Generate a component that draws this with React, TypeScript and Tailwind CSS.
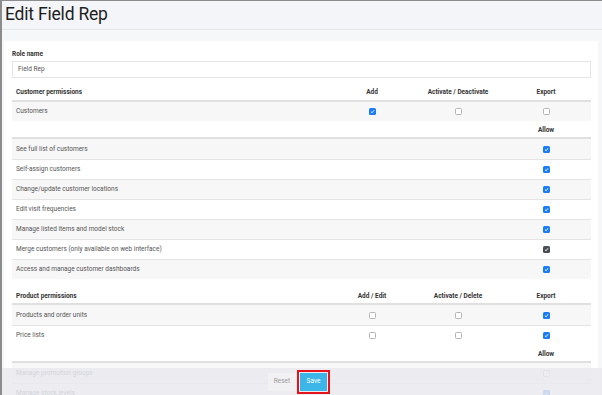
import React from "react";

type Cell = "none" | "off" | "on" | "dark";

function Box({ s }: { s: Cell }) {
  if (s === "none") return null;
  if (s === "off")
    return <span className="block w-[7px] h-[7px] rounded-[1.5px] border border-[#b4b4b4] bg-white" />;
  return (
    <span
      className={
        "flex items-center justify-center w-[7px] h-[7px] rounded-[1.5px] " +
        (s === "on" ? "bg-[#1a7df4]" : "bg-[#4a4f57]")
      }
    >
      <svg width="5" height="5" viewBox="0 0 10 10">
        <path d="M2 5.5 L4.2 7.5 L8 2.5" stroke="white" strokeWidth="1.8" fill="none" />
      </svg>
    </span>
  );
}

type Row = { label: string; cells: Cell[]; gray: boolean };

function Header({ cols, h }: { cols: string[]; h: string }) {
  return (
    <div
      className={
        "grid grid-cols-[1fr_86px_86px_90px] items-center pt-[2px] border-b-2 border-[#e0e0e0] font-bold text-[#333] " + h
      }
    >
      <div className="pl-[4px]">{cols[0]}</div>
      <div className="text-center">{cols[1]}</div>
      <div className="text-center">{cols[2]}</div>
      <div className="text-center">{cols[3]}</div>
    </div>
  );
}

function RowView({ r, h = "h-[20px]", top = true }: { r: Row; h?: string; top?: boolean }) {
  return (
    <div
      className={
        "grid grid-cols-[1fr_86px_86px_90px] items-center text-[#555] " +
        h +
        (top ? " border-t border-[#e4e4e4]" : "") +
        (r.gray ? " bg-[#f7f7f7]" : " bg-white")
      }
    >
      <div className="pl-[4px]">{r.label}</div>
      {r.cells.map((c, i) => (
        <div key={i} className="flex justify-center">
          <Box s={c} />
        </div>
      ))}
    </div>
  );
}

function AllowRow() {
  return (
    <div className="grid grid-cols-[1fr_86px_86px_90px] h-[18px] pt-[2px] items-center border-b-2 border-[#e0e0e0] font-bold text-[#333] bg-white">
      <div />
      <div />
      <div />
      <div className="text-center">Allow</div>
    </div>
  );
}

const custRows: Row[] = [
  { label: "See full list of customers", cells: ["none", "none", "on"], gray: true },
  { label: "Self-assign customers", cells: ["none", "none", "on"], gray: false },
  { label: "Change/update customer locations", cells: ["none", "none", "on"], gray: true },
  { label: "Edit visit frequencies", cells: ["none", "none", "on"], gray: false },
  { label: "Manage listed items and model stock", cells: ["none", "none", "on"], gray: true },
  { label: "Merge customers (only available on web interface)", cells: ["none", "none", "dark"], gray: false },
  { label: "Access and manage customer dashboards", cells: ["none", "none", "on"], gray: true },
];

const prodRows: Row[] = [
  { label: "Products and order units", cells: ["off", "off", "on"], gray: true },
  { label: "Price lists", cells: ["off", "off", "on"], gray: false },
];

const prodAllowRows: Row[] = [
  { label: "Manage promotion groups", cells: ["none", "none", "off"], gray: true },
  { label: "Manage stock levels", cells: ["none", "none", "on"], gray: false },
];

export default function App() {
  return (
    <div className="relative w-[602px] h-[395px] overflow-hidden bg-[#f6f7f9] border-l-2 border-t border-[#8c8c8c] font-['Roboto',sans-serif]">
      <div className="h-[29px] pl-[3px] border-b border-[#e7e8eb] bg-[#f4f5f8] flex items-center">
        <h1 className="text-[17.5px] leading-none text-[#1e1e1e] tracking-[-0.2px]">Edit Field Rep</h1>
      </div>
      <div className="pt-[11px] pl-[2px]">
        <div className="w-[594px] bg-white pl-[8px] pr-[7px] pt-[8px] text-[6.5px] leading-none">
          <div className="font-bold text-[#333] h-[11px] flex items-center">Role name</div>
          <div className="mt-[1px] h-[17px] border border-[#e5e5e5] flex items-center pl-[5px] text-[#555]">
            Field Rep
          </div>
          <div className="mt-[5px]">
            <Header h="h-[19px]" cols={["Customer permissions", "Add", "Activate / Deactivate", "Export"]} />
            <RowView r={{ label: "Customers", cells: ["on", "off", "off"], gray: true }} h="h-[19px]" top={false} />
            <AllowRow />
            {custRows.map((r, i) => (
              <RowView key={r.label} r={r} top={i !== 0} />
            ))}
          </div>
          <div className="mt-[8px]">
            <Header h="h-[18px]" cols={["Product permissions", "Add / Edit", "Activate / Delete", "Export"]} />
            {prodRows.map((r, i) => (
              <RowView key={r.label} r={r} top={i !== 0} />
            ))}
            <AllowRow />
            {prodAllowRows.map((r, i) => (
              <RowView key={r.label} r={r} top={i !== 0} />
            ))}
          </div>
        </div>
      </div>
      <div className="absolute left-0 right-0 bottom-0 h-[27px] bg-[#e9e9ee]/85 flex items-start pl-[266px] pt-[2px] text-[6.5px] font-['Roboto',sans-serif]">
        <button className="mt-[3px] h-[18px] w-[28px] bg-[#f1f1f3] text-[#9a9a9a] flex items-center justify-center">
          Reset
        </button>
        <div className="ml-[1px] border-2 border-[#e3141c] p-[1px]">
          <button className="h-[18px] w-[27px] bg-[#3cb6e9] text-white flex items-center justify-center">
            Save
          </button>
        </div>
      </div>
    </div>
  );
}
